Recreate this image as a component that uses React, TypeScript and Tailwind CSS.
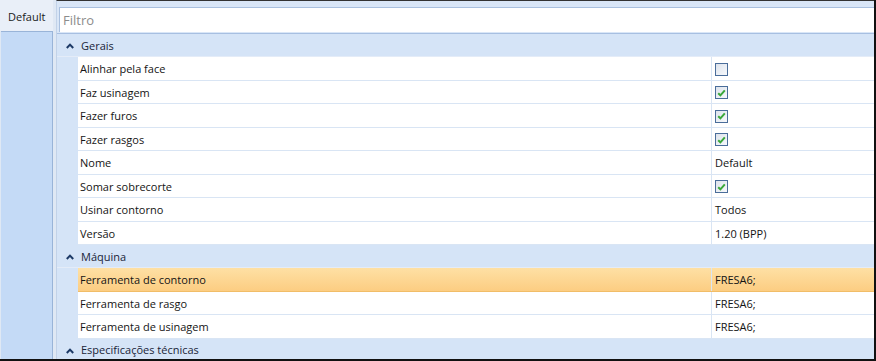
import React from "react";

type Row = { name: string; value?: string; check?: boolean; active?: boolean };

const GERAIS: Row[] = [
  { name: "Alinhar pela face", check: false },
  { name: "Faz usinagem", check: true },
  { name: "Fazer furos", check: true },
  { name: "Fazer rasgos", check: true },
  { name: "Nome", value: "Default" },
  { name: "Somar sobrecorte", check: true },
  { name: "Usinar contorno", value: "Todos" },
  { name: "Versão", value: "1.20 (BPP)" },
];

const MAQUINA: Row[] = [
  { name: "Ferramenta de contorno", value: "FRESA6;", active: true },
  { name: "Ferramenta de rasgo", value: "FRESA6;" },
  { name: "Ferramenta de usinagem", value: "FRESA6;" },
];

function Caret() {
  return (
    <svg width="8" height="6" viewBox="0 0 8 6" className="shrink-0">
      <polyline points="0.8,5 4,1.6 7.2,5" fill="none" stroke="#1d3a66" strokeWidth="2" />
    </svg>
  );
}

function CheckBox({ checked }: { checked: boolean }) {
  return (
    <span className="flex h-[13px] w-[13px] items-center justify-center border border-[#4a6d9a] bg-gradient-to-br from-[#dde3ec] to-[#f7f9fc]">
      {checked && (
        <svg width="9" height="8" viewBox="0 0 9 8">
          <polyline points="1.2,4.2 3.4,6.3 7.8,1.4" fill="none" stroke="#3aa83a" strokeWidth="2" />
        </svg>
      )}
    </span>
  );
}

function GroupHeader({ label, h }: { label: string; h: string }) {
  return (
    <div className={`flex ${h} shrink-0 items-center border-b border-[#e4ecf8] bg-[#d5e4f7] pt-[2px] pl-[9px]`}>
      <Caret />
      <span className="ml-[7px] text-[#1a2538]">{label}</span>
    </div>
  );
}

function PropRow({ row }: { row: Row }) {
  return (
    <div className="flex h-[23.5px] shrink-0 bg-[#d5e4f7]">
      <div className="w-[21px] shrink-0" />
      <div
        className={`flex flex-1 border-b pt-[2px] ${
          row.active
            ? "border-[#f1bd68] bg-gradient-to-b from-[#fee0a4] to-[#fccd82]"
            : "border-[#d9e5f4] bg-white"
        }`}
      >
        <div className="flex w-[633px] items-center pl-[2px] text-[#141414]">{row.name}</div>
        <div className="-mt-[2px] flex flex-1 items-center border-l border-[#d9e5f4] pt-[2px] pl-[3px] text-[#141414]">
          {row.check !== undefined ? <CheckBox checked={row.check} /> : row.value}
        </div>
      </div>
    </div>
  );
}

export default function App() {
  return (
    <div className="flex h-[361px] w-[876px] overflow-hidden border-r-2 border-b-2 border-[#111] bg-[#dfe8f4] font-['Open_Sans',sans-serif] text-[11px]">
      <div className="flex w-[53px] shrink-0 flex-col">
        <div className="flex h-[31px] items-center bg-[#e9eff8] pt-[3px] pl-[8px] text-[#1a1a1a]">Default</div>
        <div className="ml-[1px] flex-1 border-t border-r border-[#99b4d8] bg-[#c4daf6]" />
      </div>
      <div className="flex flex-1 flex-col pl-[3px]">
        <div className="flex flex-1 flex-col border-t border-l border-t-[#333] border-l-[#c2d2e8] bg-[#d5e4f7]">
          <div className="flex h-[33px] shrink-0 border-b border-[#a7bfe1] bg-[#d9e6f7] pt-[6px] pl-[2px]">
            <div className="flex h-[25px] flex-1 items-center border-t border-l border-[#a9c0df] bg-white pt-[1px] pl-[3px] text-[13px] text-[#8c8c8c]">
              Filtro
            </div>
          </div>
          <GroupHeader label="Gerais" h="h-[23px]" />
          {GERAIS.map((r) => (
            <PropRow key={r.name} row={r} />
          ))}
          <GroupHeader label="Máquina" h="h-[23px]" />
          {MAQUINA.map((r) => (
            <PropRow key={r.name} row={r} />
          ))}
          <GroupHeader label="Especificações técnicas" h="h-[23px]" />
        </div>
      </div>
    </div>
  );
}
